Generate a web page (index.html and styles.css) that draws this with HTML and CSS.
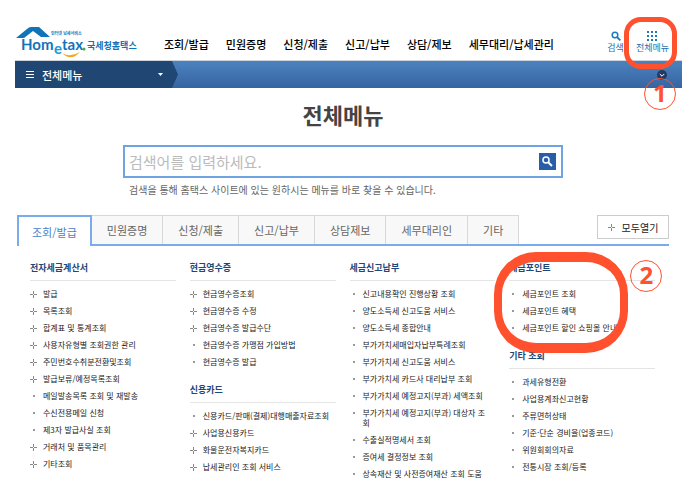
FILE: index.html
```html
<!DOCTYPE html>
<html lang="ko">
<head>
  <meta charset="UTF-8">
  <meta name="viewport" content="width=device-width, initial-scale=1.0">
  <title>전체메뉴</title>
  <link rel="stylesheet" href="styles.css">
</head>
<body>
  <header class="header">
    <a href="#" class="logo">
      <svg width="124" height="34" viewBox="0 0 124 34">
        <path d="M0 12 L11 3 Q13 1 15 1 L23 1 L34 11 L25 11 L17 5 L8 12 Z" fill="#1173b8"/>
        <text x="35" y="9" class="logo-sub">인터넷 납세서비스</text>
        <text x="5" y="24" class="logo-en">Hom</text>
        <text x="38" y="28" class="logo-en logo-e">e</text>
        <text x="46" y="24" class="logo-en">tax</text>
        <circle cx="68" cy="23" r="1.5" fill="#3cab48"/>
        <path d="M46 27 Q54 32 64 26 Q55 36 46 27 Z" fill="#f5a623"/>
        <text x="71" y="23" class="logo-ko">국세청홈택스</text>
      </svg>
    </a>
    <nav class="nav">
      <a href="#">조회/발급</a>
      <a href="#">민원증명</a>
      <a href="#">신청/제출</a>
      <a href="#">신고/납부</a>
      <a href="#">상담/제보</a>
      <a href="#">세무대리/납세관리</a>
    </nav>
    <div class="util">
      <a href="#">
        <svg width="10" height="10" viewBox="0 0 10 10"><circle cx="4" cy="4" r="2.8" fill="none" stroke="#1b79bf" stroke-width="1.5"/><path d="M6 6 L9.3 9.3" stroke="#1b79bf" stroke-width="1.8"/></svg>
        검색
      </a>
      <a href="#" class="util-all">
        <svg width="10" height="10" viewBox="0 0 10 10" fill="#1b79bf"><path d="M0 0h2v2H0zM4 0h2v2H4zM8 0h2v2H8zM0 4h2v2H0zM4 4h2v2H4zM8 4h2v2H8zM0 8h2v2H0zM4 8h2v2H4zM8 8h2v2H8z"/></svg>
        전체메뉴
        <span class="mark mark-1"></span>
        <span class="num num-1">1</span>
      </a>
    </div>
  </header>

  <div class="bar">
    <button class="bar-menu">
      <svg width="8" height="8" viewBox="0 0 8 8" fill="#fff"><path d="M0 0h8v1H0zM0 3h8v1H0zM0 6h8v1H0z"/></svg>
      <span>전체메뉴</span>
      <svg width="5" height="3" viewBox="0 0 5 3" fill="#fff"><path d="M0 0h5L2.5 3z"/></svg>
    </button>
    <button class="bar-toggle" aria-label="펼치기">
      <svg width="10" height="10" viewBox="0 0 10 10"><circle cx="5" cy="5" r="5" fill="#1f3c66"/><path d="M2.8 4 L5 6.2 L7.2 4" fill="none" stroke="#fff"/></svg>
    </button>
  </div>

  <main class="main">
    <h1>전체메뉴</h1>
    <form class="search">
      <div class="search-box">
        <input type="text" id="keyword" placeholder="검색어를 입력하세요.">
        <button type="button" aria-label="검색">
          <svg width="11" height="11" viewBox="0 0 11 11"><circle cx="4" cy="4" r="3" fill="none" stroke="#fff" stroke-width="1.5"/><path d="M6.2 6.2 L10 10" stroke="#fff" stroke-width="2"/></svg>
        </button>
      </div>
      <label for="keyword">검색을 통해 홈택스 사이트에 있는 원하시는 메뉴를 바로 찾을 수 있습니다.</label>
    </form>

    <div class="tabs">
      <button class="tab active">조회/발급</button>
      <button class="tab">민원증명</button>
      <button class="tab">신청/제출</button>
      <button class="tab">신고/납부</button>
      <button class="tab">상담제보</button>
      <button class="tab">세무대리인</button>
      <button class="tab">기타</button>
      <button class="open-all">모두열기</button>
    </div>

    <div class="columns">
      <div class="column">
        <section>
          <h2>전자세금계산서</h2>
          <ul>
            <li class="plus"><a href="#">발급</a></li>
            <li class="plus"><a href="#">목록조회</a></li>
            <li class="plus"><a href="#">합계표 및 통계조회</a></li>
            <li class="plus"><a href="#">사용자유형별 조회권한 관리</a></li>
            <li class="plus"><a href="#">주민번호수취분전환및조회</a></li>
            <li class="plus"><a href="#">발급보류/예정목록조회</a></li>
            <li><a href="#">메일발송목록 조회 및 재발송</a></li>
            <li><a href="#">수신전용메일 신청</a></li>
            <li><a href="#">제3자 발급사실 조회</a></li>
            <li class="plus"><a href="#">거래처 및 품목관리</a></li>
            <li class="plus"><a href="#">기타조회</a></li>
          </ul>
        </section>
      </div>
      <div class="column">
        <section>
          <h2>현금영수증</h2>
          <ul>
            <li class="plus"><a href="#">현금영수증조회</a></li>
            <li class="plus"><a href="#">현금영수증 수정</a></li>
            <li class="plus"><a href="#">현금영수증 발급수단</a></li>
            <li><a href="#">현금영수증 가맹점 가입방법</a></li>
            <li><a href="#">현금영수증 발급</a></li>
          </ul>
        </section>
        <section>
          <h2>신용카드</h2>
          <ul>
            <li><a href="#">신용카드/판매(결제)대행매출자료조회</a></li>
            <li class="plus"><a href="#">사업용신용카드</a></li>
            <li class="plus"><a href="#">화물운전자복지카드</a></li>
            <li class="plus"><a href="#">납세관리인 조회 서비스</a></li>
          </ul>
        </section>
      </div>
      <div class="column">
        <section>
          <h2>세금신고납부</h2>
          <ul>
            <li><a href="#">신고내용확인 진행상황 조회</a></li>
            <li><a href="#">양도소득세 신고도움 서비스</a></li>
            <li><a href="#">양도소득세 종합안내</a></li>
            <li><a href="#">부가가치세매입자납부특례조회</a></li>
            <li><a href="#">부가가치세 신고도움 서비스</a></li>
            <li><a href="#">부가가치세 카드사 대리납부 조회</a></li>
            <li><a href="#">부가가치세 예정고지(부과) 세액조회</a></li>
            <li><a href="#">부가가치세 예정고지(부과) 대상자 조회</a></li>
            <li><a href="#">수출실적명세서 조회</a></li>
            <li><a href="#">증여세 결정정보 조회</a></li>
            <li><a href="#">상속재산 및 사전증여재산 조회 도움</a></li>
          </ul>
        </section>
      </div>
      <div class="column">
        <section class="marked">
          <h2>세금포인트</h2>
          <ul>
            <li><a href="#">세금포인트 조회</a></li>
            <li><a href="#">세금포인트 혜택</a></li>
            <li><a href="#">세금포인트 할인 쇼핑몰 안내</a></li>
          </ul>
          <span class="mark mark-2"></span>
          <span class="num num-2">2</span>
        </section>
        <section>
          <h2>기타 조회</h2>
          <ul>
            <li><a href="#">과세유형전환</a></li>
            <li><a href="#">사업용계좌신고현황</a></li>
            <li><a href="#">주류면허상태</a></li>
            <li><a href="#">기준·단순 경비율(업종코드)</a></li>
            <li><a href="#">위원회회의자료</a></li>
            <li><a href="#">전통시장 조회/등록</a></li>
          </ul>
        </section>
      </div>
    </div>
  </main>
</body>
</html>
```

FILE: styles.css
```css
* {
  box-sizing: border-box;
}

body {
  margin: 0;
  height: calc(100vh - 4px);
  overflow: hidden;
  background: #fff;
  color: #333;
  font-family: "Noto Sans CJK KR", sans-serif;
}

a {
  color: inherit;
  text-decoration: none;
}

button {
  border: 0;
  padding: 0;
  font-family: inherit;
  cursor: pointer;
}

svg {
  display: block;
}

/* header */
.header {
  display: flex;
  align-items: flex-end;
  height: 61px;
  margin: 0 10px 0 15px;
  border-bottom: 1px solid #ccd3dc;
}

.logo {
  margin-left: 1px;
}

.logo svg {
  overflow: visible;
}

.logo-en {
  font: bold 15px Lato, sans-serif;
  fill: #1173b8;
}

.logo-e {
  fill: #1b9ad6;
}

.logo-sub {
  font-size: 4px;
  font-weight: bold;
  fill: #1173b8;
}

.logo-ko {
  font-size: 9px;
  font-weight: bold;
  fill: #1173b8;
}

.nav {
  display: flex;
  gap: 17px;
  margin-left: 24px;
  padding-bottom: 8px;
  font-size: 11px;
  font-weight: 500;
  line-height: 16px;
  color: #000;
  white-space: nowrap;
}

.util {
  display: flex;
  gap: 12px;
  margin-left: auto;
  padding: 0 13px 6px 0;
  font-size: 9px;
  line-height: 12px;
  color: #1b6fb0;
}

.util a {
  display: flex;
  flex-direction: column;
  align-items: center;
  gap: 1px;
  white-space: nowrap;
}

.util .util-all {
  position: relative;
}

/* blue bar */
.bar {
  display: flex;
  justify-content: space-between;
  align-items: center;
  height: 27px;
  margin: 0 10px 0 15px;
  background: linear-gradient(#4b82be, #3664a2);
}

.bar-menu {
  display: flex;
  align-items: center;
  gap: 8px;
  width: 163px;
  height: 27px;
  padding: 0 15px 0 11px;
  background: #204674;
  clip-path: polygon(0 0, 157px 0, 100% 50%, 157px 100%, 0 100%);
  color: #fff;
  font-size: 11px;
  font-weight: 500;
}

.bar-menu span {
  flex: 1;
  text-align: left;
}

.bar-toggle {
  margin-right: 15px;
  background: none;
}

/* search */
.main {
  padding: 11px 23px 0 17px;
}

h1 {
  margin: 0;
  font-size: 22px;
  line-height: 30px;
  text-align: center;
  color: #444;
}

.search {
  max-width: 440px;
  margin: 16px auto 0;
}

.search-box {
  display: flex;
  align-items: center;
  height: 33px;
  padding: 0 5px 0 4px;
  border: 2px solid #6ea3e4;
}

.search-box input {
  flex: 1;
  min-width: 0;
  padding: 0;
  border: 0;
  outline: 0;
  font-family: inherit;
  font-size: 15px;
}

.search-box input::placeholder {
  color: #bbb;
}

.search-box button {
  display: grid;
  place-items: center;
  width: 17px;
  height: 17px;
  background: #285ea8;
}

.search label {
  display: block;
  margin: 5px 0 0 6px;
  font-size: 10px;
  line-height: 14px;
  color: #666;
  white-space: nowrap;
}

/* tabs */
.tabs {
  display: flex;
  align-items: flex-start;
  margin-top: 18px;
  border-bottom: 2px solid #7aacec;
}

.tab {
  height: 29px;
  padding: 0 15px;
  border-top: 1px solid #d8d8d8;
  border-right: 1px solid #d8d8d8;
  background: #f8f8f8;
  font-size: 11px;
  color: #666;
  white-space: nowrap;
}

.tab.active {
  margin-bottom: -2px;
  height: 31px;
  padding: 0 13px;
  border: 2px solid #7aacec;
  border-bottom: 0;
  background: #fff;
  color: #4a82c8;
}

.open-all {
  display: flex;
  align-items: center;
  justify-content: center;
  gap: 7px;
  width: 72px;
  height: 24px;
  margin-left: auto;
  border: 1px solid #ccc;
  background: #fff;
  font-size: 10px;
  color: #222;
}

/* menu list */
.columns {
  display: grid;
  grid-template-columns: repeat(4, minmax(0, 1fr));
  gap: 14px;
  padding: 15px 14px 0 13px;
}

.column section {
  margin-bottom: 16px;
}

.marked {
  position: relative;
}

h2 {
  margin: 0;
  padding-bottom: 5px;
  border-bottom: 1px solid #e4e4e4;
  font-size: 9px;
  line-height: 14px;
  color: #1f4777;
}

ul {
  display: flex;
  flex-direction: column;
  gap: 7px;
  margin: 0;
  padding: 8px 5px 0 0;
  list-style: none;
}

li {
  display: flex;
  font-size: 8px;
  line-height: 10px;
  color: #222;
  word-break: break-all;
}

li::before {
  content: "";
  flex: none;
  width: 2px;
  height: 2px;
  margin: 4px 8px 0 3px;
  background: #999;
}

li.plus::before,
.open-all::before {
  content: "";
  flex: none;
  width: 7px;
  height: 7px;
  background:
    linear-gradient(#888, #888) 3px 0 / 1px 3px no-repeat,
    linear-gradient(#888, #888) 3px 4px / 1px 3px no-repeat,
    linear-gradient(#888, #888) 0 3px / 3px 1px no-repeat,
    linear-gradient(#888, #888) 4px 3px / 3px 1px no-repeat;
}

li.plus::before {
  margin: 2px 6px 0 0;
}

/* numbered marks over the menu */
.mark {
  position: absolute;
  border: 5px solid #ff512e;
}

.mark-1 {
  top: -14px;
  left: -12px;
  width: 53px;
  height: 52px;
  border-radius: 17px;
}

.mark-2 {
  top: -9px;
  left: -15px;
  width: 134px;
  height: 101px;
  border-width: 10px 8px;
  border-radius: 42px;
}

.num {
  position: absolute;
  display: grid;
  place-items: center;
  width: 32px;
  height: 32px;
  padding-bottom: 4px;
  border: 1px solid #ff512e;
  border-radius: 50%;
  font: bold 24px/28px "Open Sans", sans-serif;
  color: #ff512e;
}

.num-1 {
  top: 47px;
  left: 8px;
}

.num-2 {
  top: -1px;
  left: 121px;
}
```
